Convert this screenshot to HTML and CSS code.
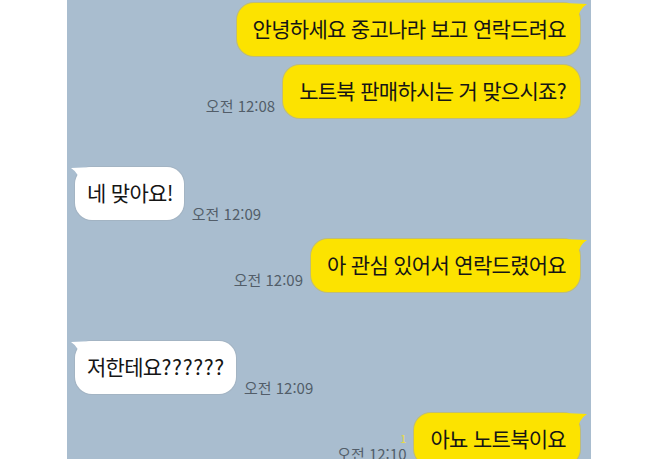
FILE: index.html
```html
<!DOCTYPE html>
<html lang="ko">
<head>
  <meta charset="UTF-8" />
  <meta name="viewport" content="width=device-width, initial-scale=1.0"/>
  <title>채팅</title>
  <link rel="stylesheet" href="styles.css">
</head>
<body>
  <div class="chat">
    <div class="row mine">
      <div class="bubble tail">안녕하세요 중고나라 보고 연락드려요</div>
    </div>
    <div class="row mine gap-sm">
      <span class="time">오전 12:08</span>
      <div class="bubble">노트북 판매하시는 거 맞으시죠?</div>
    </div>

    <div class="row theirs gap-lg">
      <div class="bubble tail">네 맞아요!</div>
      <span class="time">오전 12:09</span>
    </div>

    <div class="row mine gap-md">
      <span class="time">오전 12:09</span>
      <div class="bubble tail">아 관심 있어서 연락드렸어요</div>
    </div>

    <div class="row theirs gap-lg">
      <div class="bubble tail">저한테요<span class="marks">??????</span></div>
      <span class="time">오전 12:09</span>
    </div>

    <div class="row mine gap-md">
      <div class="meta">
        <span class="unread">1</span>
        <span class="time">오전 12:10</span>
      </div>
      <div class="bubble tail">아뇨 노트북이요</div>
    </div>
  </div>
</body>
</html>
```

FILE: styles.css
```css
body {
  margin: 0;
  background: #fff;
  font-family: "Noto Sans CJK KR", "Noto Sans", sans-serif;
}
.chat {
  margin-left: 67px;
  width: 524px;
  height: 459px;
  box-sizing: border-box;
  padding: 3px 11px 0 8px;
  background: #a9bdcf;
  overflow: hidden;
  display: flex;
  flex-direction: column;
}
.row {
  display: flex;
  align-items: flex-end;
  gap: 8px;
}
.row.mine {
  justify-content: flex-end;
}
.gap-sm { margin-top: 9px; }
.gap-md { margin-top: 19px; }
.gap-lg { margin-top: 49px; }

.bubble {
  position: relative;
  height: 53px;
  box-sizing: border-box;
  padding: 12px 14px 14px 16px;
  border-radius: 17px;
  font-size: 21px;
  line-height: 27px;
  letter-spacing: -0.7px;
  color: #151515;
  white-space: nowrap;
}
.mine .bubble {
  background: #fce300;
  box-shadow: 0 0 0 1px rgba(214, 186, 20, 0.45);
}
.theirs .bubble {
  background: #fff;
  padding: 12px 11px 14px 12px;
  box-shadow: 0 0 0 1px rgba(150, 160, 170, 0.3);
}
.marks {
  letter-spacing: 0.6px;
}
.mine .bubble.tail::after {
  content: "";
  position: absolute;
  top: 0;
  right: -7px;
  width: 23px;
  height: 18px;
  background: #fce300;
  clip-path: path("M0 0 L23 1 Q15 6 13 18 L0 18 Z");
}
.theirs .bubble.tail::before {
  content: "";
  position: absolute;
  top: 0;
  left: -4px;
  width: 23px;
  height: 18px;
  background: #fff;
  clip-path: path("M23 0 L0 1 Q8 6 10 18 L23 18 Z");
}

.time {
  font-size: 15px;
  line-height: 16px;
  color: #525d69;
  white-space: nowrap;
}
.mine .time {
  margin-bottom: 4px;
}
.theirs .time {
  margin-bottom: -2px;
}
.meta {
  display: flex;
  flex-direction: column;
  align-items: flex-end;
}
.unread {
  font-size: 11px;
  line-height: 12px;
  color: #ecdc3c;
  margin-bottom: 2px;
}
```
